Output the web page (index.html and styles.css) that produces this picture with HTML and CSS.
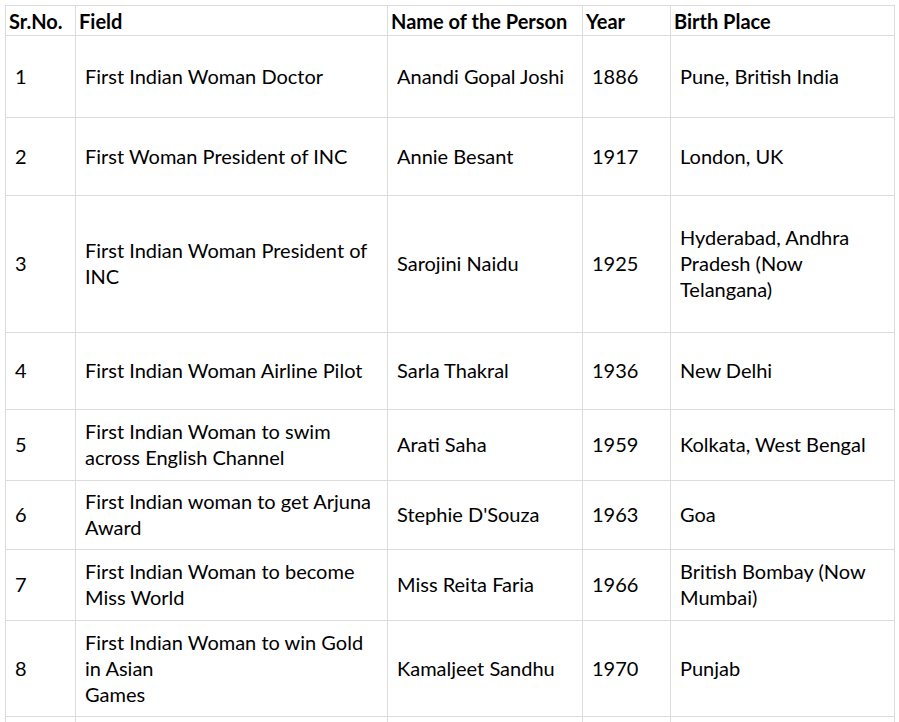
FILE: index.html
```html
<!DOCTYPE html>
<html lang="en">
<head>
<meta charset="utf-8">
<title>First Indian Women</title>
<link rel="stylesheet" href="styles.css">
</head>
<body>
<table class="grid">
  <colgroup>
    <col class="c-no">
    <col class="c-field">
    <col class="c-name">
    <col class="c-year">
    <col class="c-place">
  </colgroup>
  <thead>
    <tr class="head">
      <th>Sr.No.</th>
      <th>Field</th>
      <th>Name of the Person</th>
      <th>Year</th>
      <th>Birth Place</th>
    </tr>
  </thead>
  <tbody>
    <tr class="r1">
      <td>1</td>
      <td>First Indian Woman Doctor</td>
      <td>Anandi Gopal Joshi</td>
      <td>1886</td>
      <td>Pune, British India</td>
    </tr>
    <tr class="r2">
      <td>2</td>
      <td>First Woman President of INC</td>
      <td>Annie Besant</td>
      <td>1917</td>
      <td>London, UK</td>
    </tr>
    <tr class="r3">
      <td>3</td>
      <td>First Indian Woman President of<br>INC</td>
      <td>Sarojini Naidu</td>
      <td>1925</td>
      <td>Hyderabad, Andhra<br>Pradesh (Now<br>Telangana)</td>
    </tr>
    <tr class="r4">
      <td>4</td>
      <td>First Indian Woman Airline Pilot</td>
      <td>Sarla Thakral</td>
      <td>1936</td>
      <td>New Delhi</td>
    </tr>
    <tr class="r5">
      <td>5</td>
      <td>First Indian Woman to swim<br>across English Channel</td>
      <td>Arati Saha</td>
      <td>1959</td>
      <td>Kolkata, West Bengal</td>
    </tr>
    <tr class="r6">
      <td>6</td>
      <td>First Indian woman to get Arjuna<br>Award</td>
      <td>Stephie D'Souza</td>
      <td>1963</td>
      <td>Goa</td>
    </tr>
    <tr class="r7">
      <td>7</td>
      <td>First Indian Woman to become<br>Miss World</td>
      <td>Miss Reita Faria</td>
      <td>1966</td>
      <td>British Bombay (Now<br>Mumbai)</td>
    </tr>
    <tr class="r8">
      <td>8</td>
      <td>First Indian Woman to win Gold<br>in Asian<br>Games</td>
      <td>Kamaljeet Sandhu</td>
      <td>1970</td>
      <td>Punjab</td>
    </tr>
    <tr class="r9">
      <td></td>
      <td></td>
      <td></td>
      <td></td>
      <td></td>
    </tr>
  </tbody>
</table>
</body>
</html>
```
FILE: styles.css
```css
html, body {
  margin: 0;
  padding: 0;
  background: #ffffff;
}
body {
  padding: 5px 0 0 5px;
  font-family: Lato, "Open Sans", "Liberation Sans", sans-serif;
  font-size: 20px;
  line-height: 26px;
  color: #000000;
}
.grid {
  border-collapse: collapse;
  table-layout: fixed;
  width: 889px;
}
.c-no { width: 70px; }
.c-field { width: 312px; }
.c-name { width: 195px; }
.c-year { width: 88px; }
.c-place { width: 224px; }
.grid th,
.grid td {
  border: 1px solid #dcdcdc;
  vertical-align: middle;
  text-align: left;
  white-space: nowrap;
  overflow: hidden;
}
.grid th {
  font-weight: bold;
  padding: 0 3px;
}
.grid td {
  padding: 0 4px 2px 9px;
}
.head { height: 30px; }
.r1 { height: 82px; }
.r2 { height: 78px; }
.r3 { height: 137px; }
.r4 { height: 77px; }
.r5 { height: 71px; }
.r6 { height: 69px; }
.r7 { height: 71px; }
.r8 { height: 96px; }
.r9 { height: 20px; }
```
